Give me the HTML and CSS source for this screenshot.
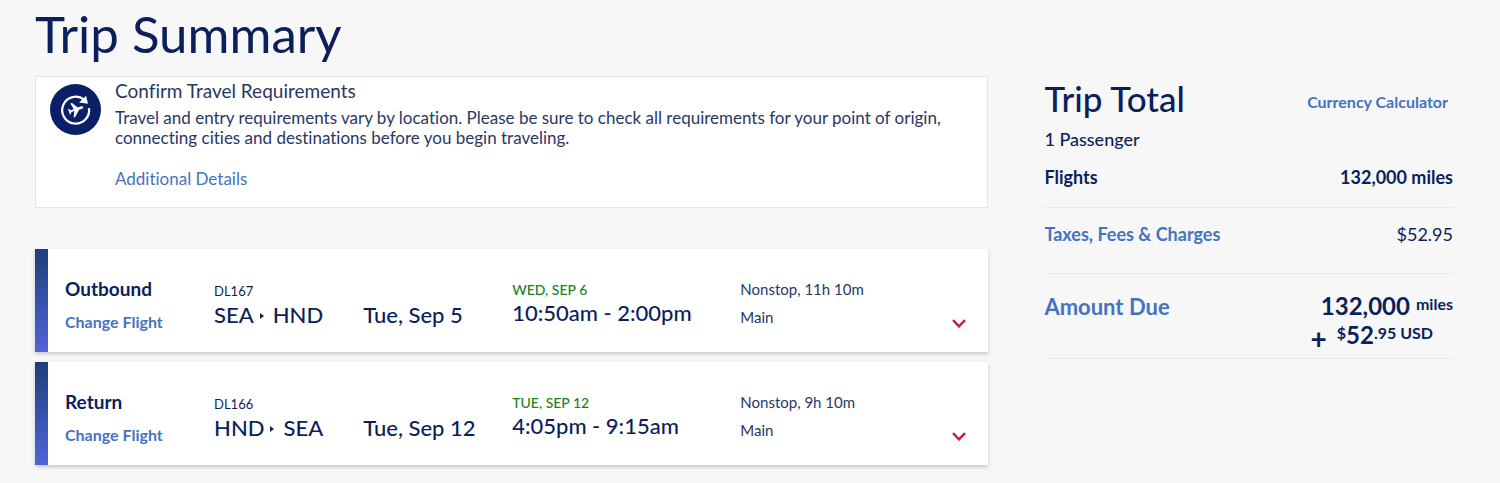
FILE: index.html
```
<!DOCTYPE html>
<html lang="en">
<head>
	<meta charset="utf-8">
	<meta name="viewport" content="width=device-width, initial-scale=1">
	<title>Trip Summary</title>
	<link rel="stylesheet" href="styles.css">
</head>
<body>
	<main class="page">
		<h1 class="page-title">Trip Summary</h1>
		<div class="columns">
			<div class="trip">
				<section class="notice">
					<svg class="notice-icon" viewBox="0 0 50 50" aria-hidden="true">
						<circle cx="25" cy="25" r="25" fill="#0b1f66"/>
						<path d="M33.5 15.4A13.2 13.2 0 1 0 38.2 23.6" fill="none" stroke="#fff" stroke-width="2.2"/>
						<path d="M35.4 11.4L37.2 19.4L28.6 18.2Z" fill="#fff"/>
						<path d="M32.6 22.6c-.3-.9-1.3-1-2.2-.7l-3.2 1.1-5.6-4.3-1.6.5 3.3 5.5-2.9 1-1.8-1.3-1.1.4 1.3 2.4.5 2.7 1.1-.4.6-2 2.9-1-.8 6.4 1.6-.6 3.9-7 3-1.1c.8-.3 1.3-.8 1-1.6z" fill="#fff"/>
					</svg>
					<div class="notice-body">
						<h2 class="notice-title">Confirm Travel Requirements</h2>
						<p class="notice-text">Travel and entry requirements vary by location. Please be sure to check all requirements for your point of origin, connecting cities and destinations before you begin traveling.</p>
						<a class="notice-link" href="#">Additional Details</a>
					</div>
				</section>

				<article class="flight">
					<div class="flight-cell">
						<h3 class="flight-name">Outbound</h3>
						<a class="flight-change" href="#">Change Flight</a>
					</div>
					<div class="flight-cell">
						<span class="flight-number">DL167</span>
						<span class="flight-main">SEA<i class="route-arrow"></i>HND</span>
					</div>
					<div class="flight-cell flight-date">
						<span class="flight-main">Tue, Sep 5</span>
					</div>
					<div class="flight-cell">
						<span class="flight-arrival">WED, SEP 6</span>
						<span class="flight-main">10:50am - 2:00pm</span>
					</div>
					<div class="flight-cell flight-info">
						<span>Nonstop, 11h 10m</span>
						<span>Main</span>
					</div>
					<button class="flight-toggle" type="button" aria-label="Show outbound details">
						<svg viewBox="0 0 14 9" aria-hidden="true"><path d="M1 1.2L7 7.4L13 1.2"/></svg>
					</button>
				</article>

				<article class="flight">
					<div class="flight-cell">
						<h3 class="flight-name">Return</h3>
						<a class="flight-change" href="#">Change Flight</a>
					</div>
					<div class="flight-cell">
						<span class="flight-number">DL166</span>
						<span class="flight-main">HND<i class="route-arrow"></i>SEA</span>
					</div>
					<div class="flight-cell flight-date">
						<span class="flight-main">Tue, Sep 12</span>
					</div>
					<div class="flight-cell">
						<span class="flight-arrival">TUE, SEP 12</span>
						<span class="flight-main">4:05pm - 9:15am</span>
					</div>
					<div class="flight-cell flight-info">
						<span>Nonstop, 9h 10m</span>
						<span>Main</span>
					</div>
					<button class="flight-toggle" type="button" aria-label="Show return details">
						<svg viewBox="0 0 14 9" aria-hidden="true"><path d="M1 1.2L7 7.4L13 1.2"/></svg>
					</button>
				</article>
			</div>

			<aside class="total">
				<div class="total-head">
					<h2 class="total-title">Trip Total</h2>
					<a class="total-currency" href="#">Currency Calculator</a>
				</div>
				<p class="total-passengers">1 Passenger</p>
				<div class="total-row total-flights">
					<span>Flights</span>
					<span>132,000 miles</span>
				</div>
				<div class="total-row total-taxes">
					<a href="#">Taxes, Fees &amp; Charges</a>
					<span>$52.95</span>
				</div>
				<div class="total-row total-due">
					<a class="due-label" href="#">Amount Due</a>
					<div class="due-amount">
						<div class="due-line"><span>132,000</span><span class="due-small due-unit">miles</span></div>
						<div class="due-line due-cash"><span class="due-plus">+</span><span class="due-small">$</span><span>52</span><span class="due-small">.95 USD</span></div>
					</div>
				</div>
			</aside>
		</div>
	</main>
</body>
</html>
```

FILE: styles.css
```
* {
	box-sizing: border-box;
}

body {
	margin: 0;
	background: #f7f7f7;
	color: #0b1f5c;
	font-family: Lato, "Open Sans", sans-serif;
	font-size: 16px;
	font-variant-ligatures: none;
	line-height: 24px;
}

h1, h2, h3, p {
	margin: 0;
	font-weight: 400;
}

a {
	color: #4573c0;
	text-decoration: none;
}

.page {
	padding: 4px 47px 18px 35px;
}

.page-title {
	margin-bottom: 12px;
	font-size: 51px;
	line-height: 60px;
}

.columns {
	display: grid;
	grid-template-columns: 7fr 3fr;
	column-gap: 56px;
	align-items: start;
}

/* travel requirements */
.notice {
	display: flex;
	gap: 14px;
	margin-bottom: 41px;
	padding: 0 30px 16px 14px;
	border: 1px solid #e3e4e8;
	background: #fff;
	color: #2a3765;
}

.notice-icon {
	flex: none;
	width: 51px;
	height: 51px;
	margin-top: 7px;
}

.notice-title {
	font-size: 19px;
	line-height: 28px;
}

.notice-text {
	margin: 3px 0 19px;
	font-size: 17px;
	line-height: 20px;
}

.notice-link {
	display: block;
	font-size: 17px;
}

/* flights */
.flight {
	display: grid;
	grid-template-columns: 149fr 149fr 149fr 228fr 212fr 14px;
	margin-bottom: 10px;
	padding: 28px 22px 18px 30px;
	background: linear-gradient(#1d3f7c, #5165d6) left / 13px 100% no-repeat #fff;
	box-shadow: 0 2px 4px rgba(0, 0, 0, 0.2);
}

.flight:last-child {
	margin-bottom: 0;
}

.flight-cell {
	display: flex;
	flex-direction: column;
	white-space: nowrap;
}

.flight-name {
	margin-bottom: 9px;
	font-size: 19px;
	font-weight: 700;
}

.flight-change {
	font-weight: 700;
}

.flight-number {
	font-size: 13px;
	line-height: 28px;
}

.flight-arrival {
	color: #1c8223;
	font-size: 14px;
	font-weight: 500;
	line-height: 26px;
}

.flight-main {
	font-size: 22px;
	font-weight: 500;
	line-height: 20px;
}

.flight-date {
	padding-top: 28px;
}

.flight-info {
	gap: 4px;
	color: #2a3765;
	font-size: 15px;
}

.route-arrow {
	display: inline-block;
	margin: 0 9px 4px 6px;
	border: solid transparent;
	border-width: 3px 0 3px 4px;
	border-left-color: #0b1f5c;
}

.flight-toggle {
	align-self: end;
	height: 9px;
	margin-bottom: 6px;
	padding: 0;
	border: 0;
	background: none;
	cursor: pointer;
}

.flight-toggle svg {
	display: block;
	width: 14px;
	height: 9px;
	fill: none;
	stroke: #c4203f;
	stroke-width: 2.4;
}

/* trip total */
.total {
	font-size: 18px;
}

.total-head {
	display: flex;
	justify-content: space-between;
	align-items: center;
	padding-right: 5px;
}

.total-title {
	font-size: 35px;
	font-weight: 500;
	line-height: 44px;
}

.total-currency {
	margin-top: 8px;
	font-size: 16px;
	font-weight: 700;
}

.total-passengers {
	margin: 7px 0 14px;
	font-weight: 500;
}

.total-row {
	display: flex;
	justify-content: space-between;
	border-bottom: 1px solid #e9eaf0;
}

.total-row a {
	font-weight: 700;
}

.total-flights {
	padding-bottom: 18px;
	font-weight: 700;
}

.total-taxes {
	padding: 14px 0 27px;
}

.total-due {
	padding: 18px 0 9px;
}

.due-label {
	font-size: 22px;
	line-height: 30px;
}

.due-amount {
	font-size: 24px;
	font-weight: 700;
	line-height: 28px;
}

.due-line {
	display: flex;
	justify-content: flex-end;
}

.due-small {
	font-size: 16px;
	line-height: 24px;
}

.due-unit {
	margin-left: 6px;
}

.due-cash {
	margin-top: 1px;
	padding-right: 20px;
}

.due-plus {
	height: 28px;
	margin-right: 10px;
	font-size: 28px;
	line-height: 34px;
}
```
